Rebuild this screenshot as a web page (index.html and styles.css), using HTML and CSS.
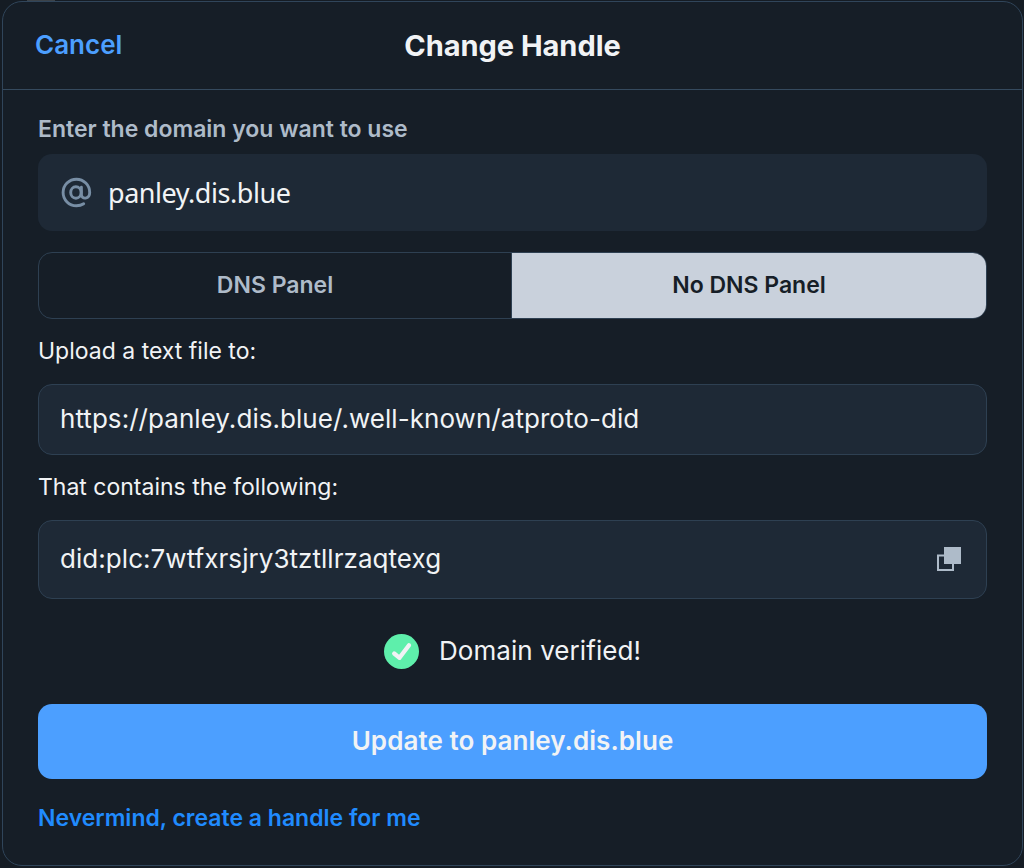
FILE: index.html
```html
<!DOCTYPE html>
<html lang="en">
<head>
<meta charset="utf-8">
<title>Change Handle</title>
<link rel="stylesheet" href="styles.css">
</head>
<body>
<main class="dialog">
  <header class="header">
    <a class="cancel"><span>Cancel</span></a>
    <h1 class="title"><span>Change Handle</span></h1>
  </header>
  <section class="content">
    <div class="label"><span>Enter the domain you want to use</span></div>
    <div class="input">
      <svg class="at" viewBox="0 0 32 32" width="32" height="32" fill="none" stroke="#788ea5" stroke-width="2.9" stroke-linecap="round">
        <ellipse cx="15.900" cy="15.500" rx="5.200" ry="5.700"/>
        <path d="M21.400 10.200V17.500c0 5.400 8.300 4.800 8.300-2A13.300 13.300 0 1 0 16.400 28.800c3 0 5.300-.7 7.300-2"/>
      </svg>
      <span class="domain">panley.dis.blue</span>
    </div>
    <div class="tabs">
      <div class="tab"><span>DNS Panel</span></div>
      <div class="tab selected"><span>No DNS Panel</span></div>
    </div>
    <p class="hint upload"><span>Upload a text file to:</span></p>
    <div class="value url"><span>https://panley.dis.blue/.well-known/atproto-did</span></div>
    <p class="hint contains"><span>That contains the following:</span></p>
    <div class="value did">
      <span>did:plc:7wtfxrsjry3tztllrzaqtexg</span>
      <svg class="copy" viewBox="0 0 24 24" width="24" height="24">
        <path d="M1 8.500h15V23H1z" fill="none" stroke="#aebbc9" stroke-width="2"/>
        <path d="M7 0h17v17H7z" fill="#aebbc9"/>
      </svg>
    </div>
    <div class="status">
      <svg class="check" viewBox="0 0 35 35" width="35" height="35">
        <circle cx="17.500" cy="17.500" r="17.500" fill="#5eefab"/>
        <path d="M10.200 19.500l5.300 4.300L25 11.200" fill="none" stroke="#f1f3f5" stroke-width="4.300" stroke-linecap="round" stroke-linejoin="round"/>
      </svg>
      <span>Domain verified!</span>
    </div>
    <button class="update"><span>Update to panley.dis.blue</span></button>
    <a class="nevermind"><span>Nevermind, create a handle for me</span></a>
  </section>
</main>
</body>
</html>
```
FILE: styles.css
```css
* { box-sizing: border-box; }
body {
  margin: 0;
  height: 868px;
  padding: 1px 1px 2px 2px;
  background: linear-gradient(#3b4248, #3b4248) 27px 0 / 28px 1px no-repeat #151c24;
  font-family: Inter, "Liberation Sans", sans-serif;
  color: #f1f3f5;
  overflow: hidden;
}
.dialog {
  height: 865px;
  background: #161e27;
  border: 1px solid #30455a;
  border-radius: 20px;
}
.header {
  display: grid;
  grid-template-columns: 200px 1fr 200px;
  align-items: center;
  height: 88px;
  padding-bottom: 2px;
  border-bottom: 1px solid #354a5e;
}
.cancel {
  padding-left: 32px;
  color: #4c9fff;
  font-size: 26px;
  font-weight: 600;
}
.title {
  margin: 0;
  padding-top: 1px;
  text-align: center;
  font-size: 29px;
  font-weight: 700;
  letter-spacing: -0.03px;
}
.content {
  display: flex;
  flex-direction: column;
  padding: 22px 35px 0;
}
.label {
  height: 42px;
  line-height: 34px;
  color: #aebbc9;
  font-size: 23px;
  font-weight: 600;
}
.input {
  display: flex;
  align-items: center;
  gap: 16px;
  height: 77px;
  padding: 0 22px;
  border-radius: 14px;
  background: #1e2936;
}
.domain {
  font-family: "Noto Sans", sans-serif;
  font-size: 27px;
  letter-spacing: -0.45px;
}
.tabs {
  display: grid;
  grid-template-columns: 472px 1fr;
  height: 67px;
  margin-top: 21px;
  border: 1px solid #2e4052;
  border-radius: 14px;
  overflow: hidden;
}
.tab {
  display: flex;
  align-items: center;
  justify-content: center;
  padding-bottom: 2px;
  color: #aebbc9;
  font-size: 23px;
  font-weight: 600;
}
.selected {
  background: #c9d1dc;
  border-left: 1px solid #2e4052;
  color: #161e27;
}
.hint {
  margin: 0;
  font-size: 23px;
}
.upload { height: 65px; line-height: 64px; }
.contains { height: 65px; line-height: 64px; }
.value {
  display: flex;
  align-items: center;
  justify-content: space-between;
  padding: 0 25px 2px 21px;
  border: 1px solid #2e4052;
  border-radius: 14px;
  background: #1e2936;
  font-size: 26px;
  letter-spacing: 0.05px;
}
.url { height: 71px; }
.did { height: 79px; }
.status {
  display: flex;
  align-items: center;
  justify-content: center;
  gap: 20px;
  height: 105px;
  font-size: 26px;
  letter-spacing: 0.08px;
}
.status span { padding-bottom: 2px; }
.update {
  height: 75px;
  padding: 0 0 2px;
  border: 0;
  border-radius: 14px;
  background: #4c9fff;
  color: #f1f3f5;
  font-family: inherit;
  font-size: 26px;
  font-weight: 600;
  letter-spacing: 0.06px;
}
.nevermind {
  line-height: 78px;
  color: #208bfe;
  font-size: 23px;
  font-weight: 600;
}
```
